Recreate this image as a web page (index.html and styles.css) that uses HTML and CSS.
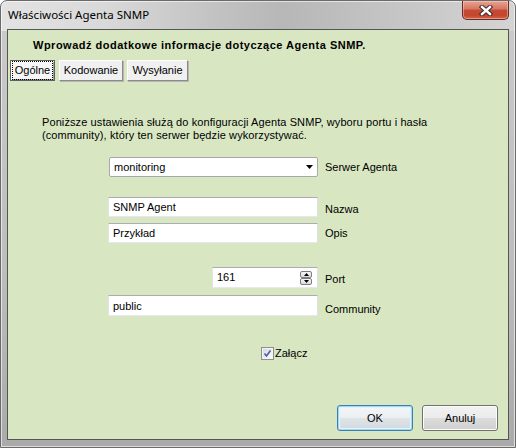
FILE: index.html
```html
<!DOCTYPE html>
<html lang="pl">
<head>
<meta charset="utf-8">
<title>Właściwości Agenta SNMP</title>
<link rel="stylesheet" href="styles.css">
</head>
<body>
<div class="window">
  <div class="titlebar">
    <span class="title">Właściwości Agenta SNMP</span>
    <div class="close" aria-label="Zamknij">
      <svg width="14" height="11" viewBox="0 0 14 11">
        <path d="M3 2 L11 9 M11 2 L3 9" stroke="#3b2b2b" stroke-width="4.4" stroke-linecap="square" fill="none"/>
        <path d="M3 2 L11 9 M11 2 L3 9" stroke="#ffffff" stroke-width="2.4" stroke-linecap="square" fill="none"/>
      </svg>
    </div>
  </div>
  <div class="client">
    <div class="header">Wprowadź dodatkowe informacje dotyczące Agenta SNMP.</div>
    <div class="tabs">
      <div class="tab tab-active w-ogolne"><span class="focus">Ogólne</span></div>
      <div class="tab w-kod">Kodowanie</div>
      <div class="tab w-wys">Wysyłanie</div>
    </div>
    <p class="desc">Poniższe ustawienia służą do konfiguracji Agenta SNMP, wyboru portu i hasła<br>(community), który ten serwer będzie wykorzystywać.</p>

    <div class="row r-combo">
      <div class="fieldcol">
        <div class="combo"><span class="val">monitoring</span>
          <svg class="arrow" width="7" height="4" viewBox="0 0 7 4"><path d="M0 0 H7 L3.5 4 Z" fill="#000"/></svg>
        </div>
      </div>
      <span class="lbl">Serwer Agenta</span>
    </div>

    <div class="row r-nazwa">
      <div class="fieldcol"><div class="text">SNMP Agent</div></div>
      <span class="lbl low">Nazwa</span>
    </div>

    <div class="row r-opis">
      <div class="fieldcol"><div class="text">Przykład</div></div>
      <span class="lbl">Opis</span>
    </div>

    <div class="row r-port">
      <div class="fieldcol end">
        <div class="text spin"><span class="val">161</span>
          <div class="spinbtns">
            <div class="sb"><svg width="7" height="4" viewBox="0 0 7 4"><path d="M0 4 H7 L3.5 0 Z" fill="#000"/></svg></div>
            <div class="sb"><svg width="7" height="4" viewBox="0 0 7 4"><path d="M0 0 H7 L3.5 4 Z" fill="#000"/></svg></div>
          </div>
        </div>
      </div>
      <span class="lbl low">Port</span>
    </div>

    <div class="row r-comm">
      <div class="fieldcol"><div class="text tall">public</div></div>
      <span class="lbl lower">Community</span>
    </div>

    <div class="check-row">
      <div class="checkbox">
        <svg width="9" height="9" viewBox="0 0 9 9"><path d="M1.5 4.5 L3.5 7 L7.5 1.5" stroke="#4a5fa0" stroke-width="1.6" fill="none"/></svg>
      </div>
      <span class="check-lbl">Załącz</span>
    </div>

    <div class="buttons">
      <div class="btn btn-default">OK</div>
      <div class="btn">Anuluj</div>
    </div>
  </div>
</div>
</body>
</html>
```

FILE: styles.css
```css
* { box-sizing: border-box; }
html, body { margin: 0; padding: 0; background: #ffffff; }
body {
  width: 516px;
  height: 448px;
  overflow: hidden;
  font-family: "Liberation Sans", Arial, sans-serif;
  font-size: 11px;
  color: #000;
}

.window {
  width: 516px;
  height: 448px;
  display: flex;
  flex-direction: column;
  border: 1px solid #6a6a6a;
  border-radius: 7px 7px 0 0;
  padding: 0 6px 7px 6px;
  background:
    linear-gradient(90deg, #e3e3e3 0%, #d9d9d9 20%, #c2c2c2 42%, #b7b7b7 55%, #c4c4c4 75%, #d4d4d4 100%) top / 100% 30px no-repeat,
    linear-gradient(180deg, #cbcbcb 0%, #bdbdbd 60%, #aaaaaa 100%);
  box-shadow: inset 0 0 0 1px rgba(255,255,255,0.6);
}

.titlebar {
  height: 28px;
  display: flex;
  justify-content: space-between;
  align-items: flex-start;
}
.title {
  font-family: "Noto Sans", "Open Sans", sans-serif;
  font-size: 11.5px;
  line-height: 16px;
  padding: 6px 0 0 1px;
  color: #000;
}
.close {
  width: 47px;
  height: 19px;
  display: flex;
  align-items: center;
  justify-content: center;
  border: 1px solid #6b2a22;
  border-top: none;
  border-radius: 0 0 5px 5px;
  background: linear-gradient(180deg, #e8a392 0%, #d77561 45%, #c44a33 50%, #c5462f 80%, #d0664e 100%);
  box-shadow: inset 0 0 0 1px rgba(255,220,210,0.45);
}

.client {
  flex: 1;
  display: flex;
  flex-direction: column;
  background: #d8e7c2;
  border: 1px solid #555555;
}

.header {
  margin-top: 8px;
  padding-left: 25px;
  font-weight: bold;
  line-height: 14px;
  letter-spacing: 0.5px;
}

.tabs {
  margin-top: 8px;
  padding-left: 2px;
  display: flex;
  gap: 4px;
}
.tab {
  height: 21px;
  display: flex;
  align-items: center;
  justify-content: center;
  background: #f0f0f0;
  border: 1px solid;
  border-color: #ffffff #8a8a8a #8a8a8a #ffffff;
  box-shadow: 1px 1px 0 #b5b5b5;
  line-height: 13px;
}
.tab-active {
  border-color: #5f5f5f;
  background: #f7f7f7;
  box-shadow: inset 1px 1px 0 #ffffff, inset -1px -1px 0 #a0a0a0;
}
.focus {
  outline: 1px dotted #000;
  outline-offset: 0;
  padding: 2px 2px;
}
.w-ogolne { width: 45px; }
.w-kod { width: 64px; }
.w-wys { width: 61px; }

.desc {
  margin: 35px 0 0 0;
  padding-left: 34px;
  line-height: 13px;
  letter-spacing: 0.1px;
}

.row {
  display: flex;
  align-items: center;
  gap: 7px;
  padding-left: 100px;
}
.fieldcol {
  width: 210px;
  display: flex;
}
.fieldcol.end { justify-content: flex-end; }
.r-combo { margin-top: 15px; }
.r-nazwa { margin-top: 20px; }
.r-opis { margin-top: 6px; }
.r-port { margin-top: 24px; }
.r-comm { margin-top: 7px; }

.lbl { line-height: 13px; }
.lbl.low { margin-top: 4px; }
.lbl.lower { margin-top: 7px; }

.text, .combo {
  width: 210px;
  height: 20px;
  display: flex;
  align-items: center;
  padding-left: 4px;
  background: #ffffff;
  border: 1px solid;
  border-color: #abadb3 #dbdfe6 #e3e9ef #e2e3ea;
}
.text.tall { height: 21px; }
.combo {
  margin-left: 1px;
  width: 209px;
  border: 1px solid #a8a8a8;
  border-radius: 2px;
  justify-content: space-between;
  padding-right: 4px;
}
.val { line-height: 13px; }

.spin {
  width: 106px;
  height: 21px;
  justify-content: space-between;
  padding-right: 5px;
}
.spinbtns {
  display: flex;
  flex-direction: column;
}
.sb {
  width: 12px;
  height: 7px;
  display: flex;
  align-items: center;
  justify-content: center;
  border: 1px solid #7d7d7d;
  border-radius: 2px;
  background: linear-gradient(180deg, #f6f6f6, #dcdcdc);
}
.sb svg { width: 5px; height: 3px; }

.check-row {
  margin-top: 31px;
  padding-left: 253px;
  display: flex;
  align-items: center;
  gap: 1px;
}
.checkbox {
  width: 13px;
  height: 13px;
  display: flex;
  align-items: center;
  justify-content: center;
  border: 1px solid #8e8f8f;
  background: linear-gradient(135deg, #cfd3d8 0%, #eef0f2 60%, #ffffff 100%);
  box-shadow: inset 0 0 0 1px #f4f4f4;
}
.check-lbl { line-height: 13px; }

.buttons {
  margin-top: 45px;
  padding-right: 10px;
  display: flex;
  justify-content: flex-end;
  gap: 9px;
}
.btn {
  width: 76px;
  height: 26px;
  display: flex;
  align-items: center;
  justify-content: center;
  border: 1px solid #707070;
  border-radius: 3px;
  background: linear-gradient(180deg, #f2f2f2 0%, #ebebeb 49%, #dddddd 50%, #cfcfcf 100%);
  box-shadow: inset 0 0 0 1px #fcfcfc;
}
.btn-default {
  border-color: #3c7fb1;
  box-shadow: inset 0 0 0 1px #9fd9f9, inset 0 0 0 2px #e4f3fb;
  background: linear-gradient(180deg, #f4f7f9 0%, #eceff1 49%, #dfe4e7 50%, #d3d9dd 100%);
}
```
